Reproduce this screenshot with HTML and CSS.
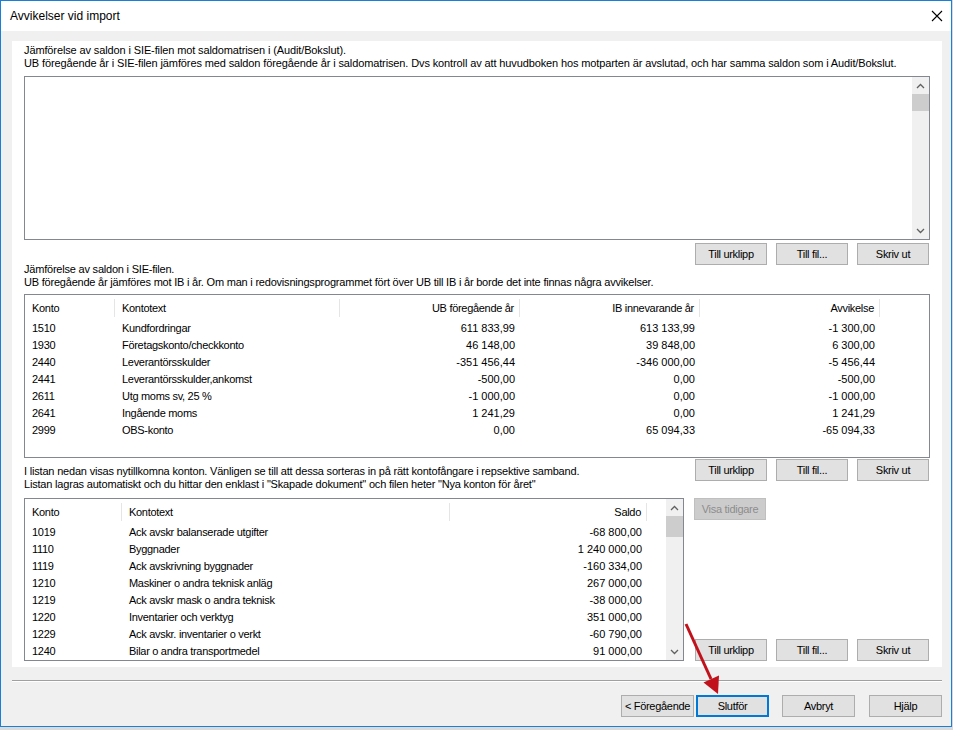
FILE: index.html
```html
<!DOCTYPE html>
<html lang="sv">
<head>
<meta charset="utf-8">
<title>Avvikelser vid import</title>
<link rel="stylesheet" href="styles.css">
</head>
<body>
<div class="window">
  <div class="titlebar">
    <span class="title">Avvikelser vid import</span>
    <span class="close"><svg width="12" height="12" viewBox="0 0 12 12"><path d="M1 1L11 11M11 1L1 11" stroke="#000" stroke-width="1.1" fill="none"/></svg></span>
  </div>
  <div class="body">
    <div class="panel">
      <div class="desc">Jämförelse av saldon i SIE-filen mot saldomatrisen i (Audit/Bokslut).<br>UB föregående år i SIE-filen jämföres med saldon föregående år i saldomatrisen. Dvs kontroll av att huvudboken hos motparten är avslutad, och har samma saldon som i Audit/Bokslut.</div>
      <div class="textbox">
        <div class="vscroll">
          <div class="arrow"><svg width="9" height="6" viewBox="0 0 9 6"><path d="M1 5L4.5 1.5L8 5" stroke="#606060" stroke-width="1.3" fill="none"/></svg></div>
          <div class="thumb t17"></div>
          <div class="track"></div>
          <div class="arrow"><svg width="9" height="6" viewBox="0 0 9 6"><path d="M1 1L4.5 4.5L8 1" stroke="#606060" stroke-width="1.3" fill="none"/></svg></div>
        </div>
      </div>
      <div class="btnrow">
        <button class="btn">Till urklipp</button><button class="btn">Till fil...</button><button class="btn">Skriv ut</button>
      </div>
      <div class="desc desc2">Jämförelse av saldon i SIE-filen.<br>UB föregående år jämföres mot IB i år. Om man i redovisningsprogrammet fört över UB till IB i år borde det inte finnas några avvikelser.</div>
      <div class="list list2">
        <div class="lrow head">
          <span class="c sep">Konto</span><span class="c sep">Kontotext</span><span class="c n sep">UB föregående år</span><span class="c n sep">IB innevarande år</span><span class="c n sep">Avvikelse</span><span class="c"></span>
        </div>
        <div class="lrow"><span class="c">1510</span><span class="c">Kundfordringar</span><span class="c n num">611 833,99</span><span class="c n num">613 133,99</span><span class="c n num">-1 300,00</span><span class="c"></span></div>
        <div class="lrow"><span class="c">1930</span><span class="c">Företagskonto/checkkonto</span><span class="c n num">46 148,00</span><span class="c n num">39 848,00</span><span class="c n num">6 300,00</span><span class="c"></span></div>
        <div class="lrow"><span class="c">2440</span><span class="c">Leverantörsskulder</span><span class="c n num">-351 456,44</span><span class="c n num">-346 000,00</span><span class="c n num">-5 456,44</span><span class="c"></span></div>
        <div class="lrow"><span class="c">2441</span><span class="c">Leverantörsskulder,ankomst</span><span class="c n num">-500,00</span><span class="c n num">0,00</span><span class="c n num">-500,00</span><span class="c"></span></div>
        <div class="lrow"><span class="c">2611</span><span class="c">Utg moms sv, 25 %</span><span class="c n num">-1 000,00</span><span class="c n num">0,00</span><span class="c n num">-1 000,00</span><span class="c"></span></div>
        <div class="lrow"><span class="c">2641</span><span class="c">Ingående moms</span><span class="c n num">1 241,29</span><span class="c n num">0,00</span><span class="c n num">1 241,29</span><span class="c"></span></div>
        <div class="lrow"><span class="c">2999</span><span class="c">OBS-konto</span><span class="c n num">0,00</span><span class="c n num">65 094,33</span><span class="c n num">-65 094,33</span><span class="c"></span></div>
      </div>
      <div class="section3">
        <div class="desc desc3">I listan nedan visas nytillkomna konton. Vänligen se till att dessa sorteras in på rätt kontofångare i repsektive samband.<br>Listan lagras automatiskt och du hittar den enklast i "Skapade dokument" och filen heter "Nya konton för året"</div>
        <div class="btnrow btnrow-inline">
          <button class="btn">Till urklipp</button><button class="btn">Till fil...</button><button class="btn">Skriv ut</button>
        </div>
      </div>
      <div class="section4">
        <div class="list list3">
          <div class="rows">
            <div class="lrow head">
              <span class="c sep">Konto</span><span class="c sep">Kontotext</span><span class="c n sep">Saldo</span><span class="c"></span>
            </div>
            <div class="lrow"><span class="c">1019</span><span class="c">Ack avskr balanserade utgifter</span><span class="c n num">-68 800,00</span><span class="c"></span></div>
            <div class="lrow"><span class="c">1110</span><span class="c">Byggnader</span><span class="c n num">1 240 000,00</span><span class="c"></span></div>
            <div class="lrow"><span class="c">1119</span><span class="c">Ack avskrivning byggnader</span><span class="c n num">-160 334,00</span><span class="c"></span></div>
            <div class="lrow"><span class="c">1210</span><span class="c">Maskiner o andra teknisk anläg</span><span class="c n num">267 000,00</span><span class="c"></span></div>
            <div class="lrow"><span class="c">1219</span><span class="c">Ack avskr mask o andra teknisk</span><span class="c n num">-38 000,00</span><span class="c"></span></div>
            <div class="lrow"><span class="c">1220</span><span class="c">Inventarier och verktyg</span><span class="c n num">351 000,00</span><span class="c"></span></div>
            <div class="lrow"><span class="c">1229</span><span class="c">Ack avskr. inventarier o verkt</span><span class="c n num">-60 790,00</span><span class="c"></span></div>
            <div class="lrow"><span class="c">1240</span><span class="c">Bilar o andra transportmedel</span><span class="c n num">91 000,00</span><span class="c"></span></div>
          </div>
          <div class="vscroll">
            <div class="arrow"><svg width="9" height="6" viewBox="0 0 9 6"><path d="M1 5L4.5 1.5L8 5" stroke="#606060" stroke-width="1.3" fill="none"/></svg></div>
            <div class="thumb t21"></div>
            <div class="track"></div>
            <div class="arrow"><svg width="9" height="6" viewBox="0 0 9 6"><path d="M1 1L4.5 4.5L8 1" stroke="#606060" stroke-width="1.3" fill="none"/></svg></div>
          </div>
        </div>
        <div class="side">
          <button class="btn disabled">Visa tidigare</button>
          <div class="btnrow btnrow-inline">
            <button class="btn">Till urklipp</button><button class="btn">Till fil...</button><button class="btn">Skriv ut</button>
          </div>
        </div>
      </div>
    </div>
    <div class="separator"></div>
    <div class="footer">
      <button class="btn fbtn">&lt; Föregående</button>
      <button class="btn fbtn default">Slutför</button>
      <button class="btn fbtn gap">Avbryt</button>
      <button class="btn fbtn gap">Hjälp</button>
    </div>
  </div>
  <svg class="annot" width="952" height="727" viewBox="0 0 952 727">
    <line x1="686" y1="624" x2="711" y2="679" stroke="#c1121c" stroke-width="3"/>
    <polygon points="718,694 703.5,682.5 719,675.5" fill="#c1121c"/>
  </svg>
</div>
</body>
</html>
```

FILE: styles.css
```css
* { box-sizing: border-box; }

body {
  margin: 0;
  background: #dadada;
  font-family: "Liberation Sans", Arial, sans-serif;
  font-size: 11px;
  color: #000;
}

.window {
  position: relative;
  width: 952px;
  height: 727px;
  border: 1px solid #1a7fd6;
  background: #f0f0f0;
  display: flex;
  flex-direction: column;
}

.titlebar {
  flex: none;
  height: 30px;
  background: #fff;
  display: flex;
  align-items: center;
  justify-content: space-between;
  padding-left: 9px;
}

.title { font-size: 12px; }

.close {
  width: 28px;
  height: 30px;
  display: flex;
  align-items: center;
  justify-content: center;
}

.body {
  flex: 1;
  padding: 10px 0 0 11px;
  display: flex;
  flex-direction: column;
}

.panel {
  width: 930px;
  height: 626px;
  background: #fff;
  padding: 3px 12px 0;
  display: flex;
  flex-direction: column;
}

.desc {
  line-height: 13px;
  white-space: nowrap;
  letter-spacing: -0.12px;
}

.textbox {
  flex: none;
  margin-top: 6px;
  height: 164px;
  border: 1px solid #828790;
  display: flex;
  justify-content: flex-end;
}

.vscroll {
  width: 17px;
  flex: none;
  background: #f0f0f0;
  display: flex;
  flex-direction: column;
}

.vscroll .arrow {
  height: 17px;
  display: flex;
  align-items: center;
  justify-content: center;
}

.thumb { background: #cdcdcd; }
.t17 { height: 17px; }
.t21 { height: 21px; }
.track { flex: 1; }

.btnrow {
  display: flex;
  justify-content: flex-end;
  gap: 9px;
  margin-top: 3px;
  padding-right: 1px;
}

.btn {
  width: 72px;
  height: 22px;
  padding: 0;
  background: #e1e1e1;
  border: 1px solid #adadad;
  font-family: inherit;
  font-size: 11px;
  letter-spacing: -0.3px;
  color: #000;
}

.btn.disabled {
  background: #cccccc;
  border-color: #bfbfbf;
  color: #8d8d8d;
}

.desc2 { margin-top: -2px; letter-spacing: -0.21px; }

.list {
  flex: none;
  border: 1px solid #828790;
  background: #fff;
}

.list2 {
  margin-top: 5px;
  height: 164px;
}

.lrow {
  display: grid;
  height: 17px;
  align-items: center;
}

.list2 .lrow { grid-template-columns: 90px 225px 180px 180px 180px 1fr; }
.list3 .lrow { grid-template-columns: 97px 328px 197px 1fr; }

.lrow.head { height: 25px; }

.c {
  padding: 0 5px 0 7px;
  white-space: nowrap;
  letter-spacing: -0.3px;
  line-height: 17px;
}

.c.n { text-align: right; padding: 0 5px 0 0; }
.c.num { letter-spacing: 0; }

.head .c { line-height: 18px; }
.head .c.sep { border-right: 1px solid #e5e5e5; }

.section3 {
  margin-top: 1px;
  display: flex;
  justify-content: space-between;
  align-items: flex-start;
}

.desc3 { margin-top: 6px; letter-spacing: -0.19px; }

.btnrow-inline { margin-top: 0; }

.section4 {
  margin-top: 7px;
  display: flex;
  height: 163px;
}

.list3 {
  width: 660px;
  height: 163px;
  display: flex;
}

.list3 .rows { flex: 1; }

.side {
  flex: 1;
  display: flex;
  flex-direction: column;
  justify-content: space-between;
  align-items: flex-end;
}

.side .disabled { margin-right: 164px; }

.separator {
  width: 930px;
  margin-top: 13px;
  height: 2px;
  border-top: 1px solid #a0a0a0;
  border-bottom: 1px solid #fff;
}

.footer {
  width: 930px;
  margin-top: 13px;
  display: flex;
  justify-content: flex-end;
}

.fbtn { width: 73px; }
.fbtn.default {
  margin-left: 2px;
  border: 2px solid #0078d7;
}
.fbtn.gap { margin-left: 13px; }
.fbtn.gap:last-child { margin-left: 14px; }

.annot {
  position: absolute;
  left: -1px;
  top: -1px;
  pointer-events: none;
}
```
